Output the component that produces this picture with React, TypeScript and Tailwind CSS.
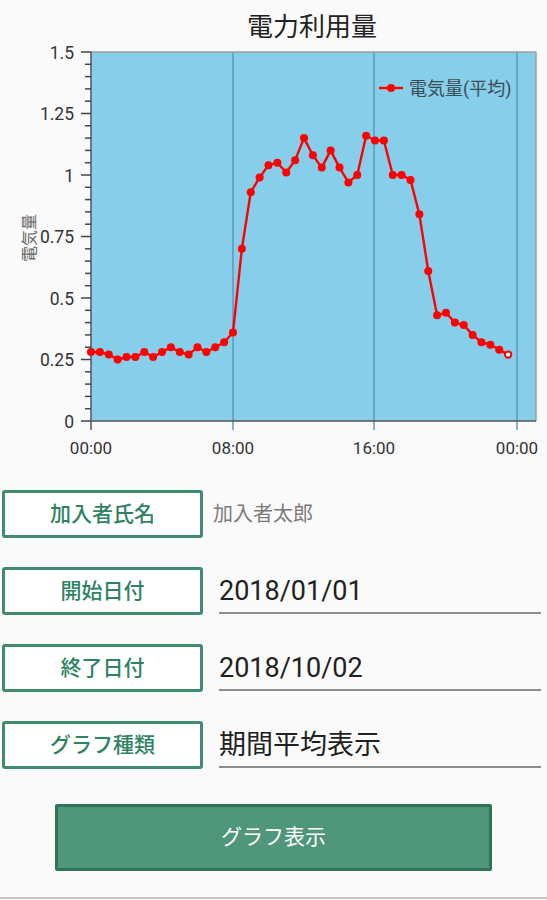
import React from "react";

// half-hour averages, 00:00 .. 23:30
const usage = [
  0.28, 0.28, 0.27, 0.25, 0.26, 0.26, 0.28, 0.26, 0.28, 0.3, 0.28, 0.27, 0.3, 0.28, 0.3, 0.32,
  0.36, 0.7, 0.93, 0.99, 1.04, 1.05, 1.01, 1.06, 1.15, 1.08, 1.03, 1.1, 1.03, 0.97, 1.0, 1.16,
  1.14, 1.14, 1.0, 1.0, 0.98, 0.84, 0.61, 0.43, 0.44, 0.4, 0.39, 0.35, 0.32, 0.31, 0.29, 0.27,
];

const FONT = 'Roboto, "Noto Sans CJK JP", sans-serif';
const X0 = 91;
const X1 = 536;
const Y0 = 421;
const Y1 = 52;
const PER_HALF = 8.875;
const PER_UNIT = 246;

const px = (i: number) => X0 + i * PER_HALF;
const py = (v: number) => Y0 - v * PER_UNIT;

function UsageChart() {
  const ticks = Array.from({ length: 31 }, (_, i) => i * 0.05);
  const majors = [0, 0.25, 0.5, 0.75, 1, 1.25, 1.5];
  const hours = [
    { x: X0, label: "00:00" },
    { x: X0 + 142, label: "08:00" },
    { x: X0 + 283, label: "16:00" },
    { x: X0 + 426, label: "00:00" },
  ];
  const line = usage.map((v, i) => `${px(i)},${py(v)}`).join(" ");

  return (
    <svg width={547} height={420} viewBox="0 44 547 420" style={{ fontFamily: FONT }}>
      <rect x={X0} y={Y1} width={X1 - X0} height={Y0 - Y1} fill="#87ceeb" />

      {hours.slice(1).map((h) => (
        <line key={h.x} x1={h.x} x2={h.x} y1={Y1} y2={430} stroke="#5d9ab6" strokeWidth={1.5} />
      ))}

      <line x1={X0} x2={X1} y1={Y1} y2={Y1} stroke="#9c9c9c" strokeWidth={1.5} />
      <line x1={X1} x2={X1} y1={Y1} y2={Y0} stroke="#9c9c9c" strokeWidth={1.5} />
      <line x1={X0} x2={X1} y1={Y0} y2={Y0} stroke="#555" strokeWidth={1.5} />
      <line x1={X0} x2={X0} y1={Y1} y2={430} stroke="#555" strokeWidth={1.5} />

      {ticks.map((t, i) => (
        <line
          key={i}
          x1={i % 5 === 0 ? 81 : 85}
          x2={X0}
          y1={py(t)}
          y2={py(t)}
          stroke="#444"
          strokeWidth={1.5}
        />
      ))}

      {majors.map((m) => (
        <text key={m} x={74} y={py(m) + 6.5} textAnchor="end" fontSize={17.5} fill="#333">
          {m}
        </text>
      ))}

      {hours.map((h, i) => (
        <text key={i} x={h.x} y={454} textAnchor="middle" fontSize={17} fill="#333">
          {h.label}
        </text>
      ))}

      <text
        x={0}
        y={0}
        transform="translate(35 238) rotate(-90)"
        textAnchor="middle"
        fontSize={16}
        fill="#666"
      >
        電気量
      </text>

      <polyline points={line} fill="none" stroke="#ff0000" strokeWidth={2.4} strokeLinejoin="round" />
      {usage.map((v, i) =>
        i === usage.length - 1 ? (
          <circle key={i} cx={px(i)} cy={py(v)} r={3.2} fill="#fff" stroke="#ff0000" strokeWidth={2} />
        ) : (
          <circle key={i} cx={px(i)} cy={py(v)} r={4} fill="#ff0000" />
        )
      )}

      <line x1={379} x2={403} y1={88} y2={88} stroke="#ff0000" strokeWidth={2.4} />
      <circle cx={391} cy={88} r={4} fill="#ff0000" />
      <text x={409} y={94.5} fontSize={18} fill="#3a4c56">
        電気量(平均)
      </text>
    </svg>
  );
}

function FieldLabel({ children }: { children: React.ReactNode }) {
  return (
    <div className="flex h-[48px] w-[201px] shrink-0 items-center justify-center rounded-[3px] border-[3px] border-[#3f8d6c] bg-white text-[21px] font-medium leading-none text-[#2f8362]">
      {children}
    </div>
  );
}

function EditValue({ children }: { children: React.ReactNode }) {
  return (
    <div className="ml-[16px] flex h-[47px] flex-1 items-center self-start border-b-2 border-[#8d8d8d] pt-[4px] text-[27px] leading-none text-[#212121]">
      {children}
    </div>
  );
}

export default function App() {
  return (
    <div className="flex h-[900px] w-[547px] flex-col bg-[#fafafa]" style={{ fontFamily: FONT }}>
      <div className="flex h-[44px] items-end justify-center pl-[88px] pr-[11px]">
        <h1 className="pb-[1px] text-[26px] font-normal leading-[32px] text-[#222]">電力利用量</h1>
      </div>

      <UsageChart />

      <div className="mt-[26px] flex flex-col gap-[29px] pl-[2px] pr-[6px]">
        <div className="flex items-center">
          <FieldLabel>加入者氏名</FieldLabel>
          <span className="ml-[10px] text-[20px] leading-none text-[#7a7a7a]">加入者太郎</span>
        </div>
        <div className="flex items-center">
          <FieldLabel>開始日付</FieldLabel>
          <EditValue>2018/01/01</EditValue>
        </div>
        <div className="flex items-center">
          <FieldLabel>終了日付</FieldLabel>
          <EditValue>2018/10/02</EditValue>
        </div>
        <div className="flex items-center">
          <FieldLabel>グラフ種類</FieldLabel>
          <EditValue>期間平均表示</EditValue>
        </div>
      </div>

      <div className="mt-[35px] flex justify-start pl-[55px]">
        <button
          type="button"
          className="flex h-[67px] w-[437px] items-center justify-center rounded-[2px] border-[3px] border-[#2e7656] bg-[#4f967a] text-[21px] leading-none text-white"
        >
          グラフ表示
        </button>
      </div>

      <div className="mt-auto mb-[1px] h-[2px] bg-[#c4c4c4]" />
    </div>
  );
}
